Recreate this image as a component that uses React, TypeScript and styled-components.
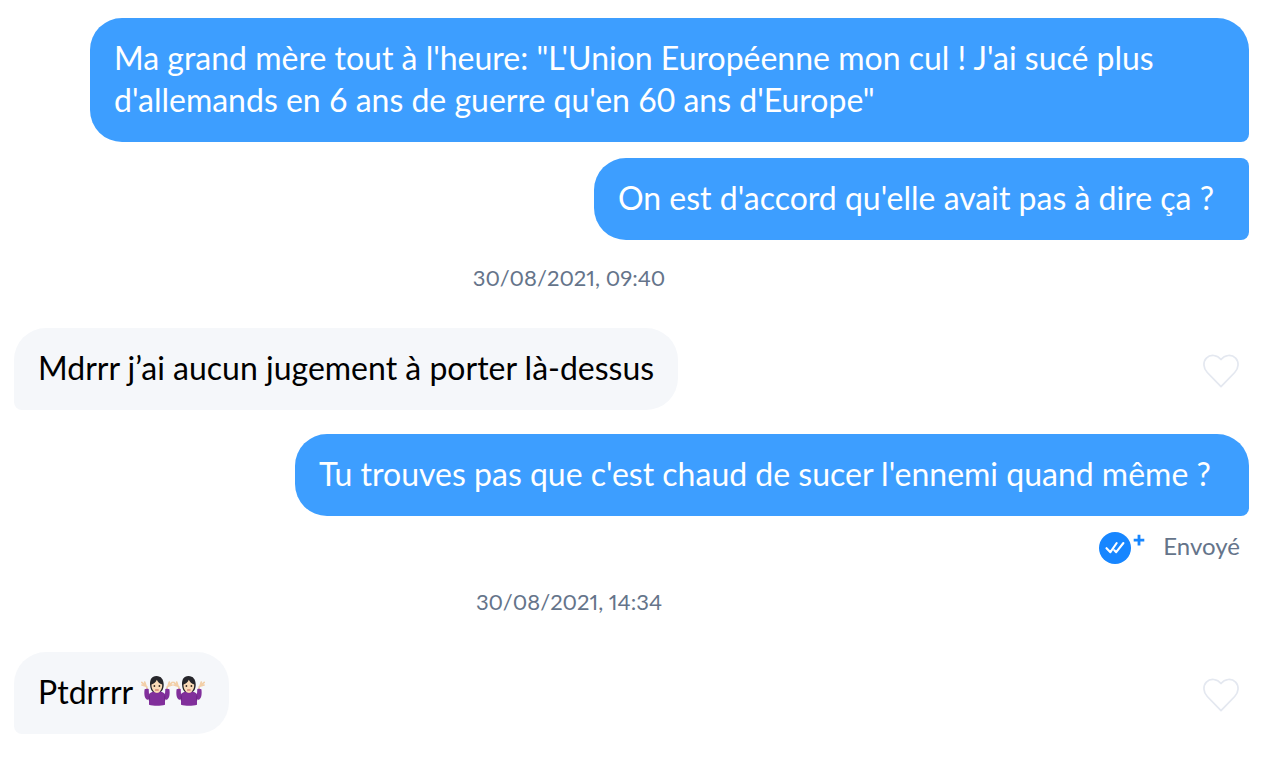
import React from "react";
import styled, { createGlobalStyle, css } from "styled-components";

const GlobalStyle = createGlobalStyle`
  *, *::before, *::after { box-sizing: border-box; }
  body {
    margin: 0;
    background: #fff;
    font-family: Lato, "Liberation Sans", sans-serif;
  }
`;

const Conversation = styled.main`
  display: flex;
  flex-direction: column;
  padding: 18px 25px 25px 14px;
`;

const Row = styled.div<{ $sent?: boolean; $gap?: number }>`
  display: flex;
  align-items: center;
  justify-content: ${(p) => (p.$sent ? "flex-end" : "space-between")};
  padding-left: ${(p) => (p.$sent ? 76 : 0)}px;
  margin-top: ${(p) => p.$gap ?? 0}px;
`;

const sentStyle = css<{ $grouped?: boolean }>`
  background: #3d9eff;
  color: #fff;
  border-radius: 32px ${(p) => (p.$grouped ? 8 : 32)}px 8px 32px;
`;

const receivedStyle = css`
  background: #f5f7fa;
  color: #000;
  border-radius: 32px 32px 32px 8px;
`;

const Bubble = styled.p<{ $sent?: boolean; $grouped?: boolean; $minWidth?: number }>`
  margin: 0;
  padding: 19px 24px 21px;
  min-width: ${(p) => p.$minWidth ?? 0}px;
  font-size: 32px;
  line-height: 42px;
  ${(p) => (p.$sent ? sentStyle : receivedStyle)}
`;

const EmojiSvg = styled.svg`
  width: 32px;
  height: 32px;
  vertical-align: -3px;
`;

const Timestamp = styled.time`
  display: block;
  padding-right: 125px;
  text-align: center;
  font-size: 22px;
  font-variant-numeric: proportional-nums;
  line-height: 32px;
  color: #65748a;
  margin: 22px 0 34px;
`;

const LikeButton = styled.button`
  display: flex;
  padding: 4px 0 0;
  margin-right: 8px;
  border: 0;
  background: none;
  cursor: pointer;
`;

const Status = styled.div`
  display: flex;
  align-items: center;
  justify-content: flex-end;
  gap: 16px;
  height: 32px;
  margin-top: 16px;
  padding-right: 9px;
  font-size: 24px;
  line-height: 28px;
  color: #65748a;
`;

const StatusText = styled.span`
  padding-bottom: 4px;
`;

function Like() {
  return (
    <LikeButton type="button" aria-label="J'aime">
      <svg width="40" height="40" viewBox="0 0 40 40" fill="none" stroke="#e4e8f0" strokeWidth="1.7" strokeLinejoin="round">
        <path d="M20 35.7 6.3 21.5C2.2 17.2 1.8 10.8 5.4 7.1c4-4 10.9-3.4 14.6 1.5 3.7-4.9 10.6-5.5 14.6-1.5 3.6 3.7 3.2 10.1-.9 14.4Z" />
      </svg>
    </LikeButton>
  );
}

function ReadReceipt() {
  return (
    <svg width="48" height="32" viewBox="0 0 48 32" fill="none" aria-hidden="true">
      <circle cx="16" cy="16" r="16" fill="#1786ff" />
      <path
        d="m7.5 16.2 3.9 4 6.3-9.2M15.3 18.3l1.9 1.9 7.2-9.2"
        stroke="#fff"
        strokeWidth="2.1"
        strokeLinecap="round"
        strokeLinejoin="round"
      />
      <path d="M40 2.7v10.8M34.7 8.1h10.6" stroke="#1786ff" strokeWidth="2.8" />
    </svg>
  );
}

/* Woman shrugging, light skin tone */
function Shrug() {
  return (
    <EmojiSvg viewBox="0 0 32 32" role="img" aria-label="🤷🏻‍♀️">
      <path d="M15.500 1C10.500 1 8.800 5 9 9.500c.2 4 1.500 7 4 8h5.500c3-1 4.300-4.500 4.200-8C22.500 4.500 20.200 1 15.500 1Z" fill="#26262b" />
      <path d="M13.500 15h5.200v5h-5.200z" fill="#e6bd96" />
      <path
        d="m6.200 16-.4-4.200L.8 7.300M5 11.200 3.700 7M4.300 11 .9 10M25.800 16l.4-4.200 5-4.500M27 11.200 28.300 7M27.700 11l3.400-1"
        fill="none"
        stroke="#f2cfa8"
        strokeWidth="1.7"
        strokeLinecap="round"
        strokeLinejoin="round"
      />
      <path d="M3.600 14.300c1.200-.8 2.800-.8 4.100-.2l.3 5c1.500-1.500 3.500-2.400 5.500-2.600 1.500 1.600 3.700 1.600 5.200 0 2 .2 3.900 1.100 5.300 2.600l.3-5c1.300-.6 2.900-.6 4.100.2.700 4.700 0 8.900-2.100 10.200-.8.500-1.600.3-2.300-.2v5.400c-4.500 1.300-11.500 1.300-16 0v-5.400c-.7.500-1.500.7-2.300.2-2.100-1.300-2.800-5.500-2.100-10.200Z" fill="#812f9b" />
      <path d="M8.200 20.500v5M23.800 20.500v5" stroke="#64217c" strokeWidth=".8" />
      <path d="M10.500 9.500c2.500-.8 4.300-2.300 5.300-4.700 1 2.300 2.800 3.900 5.400 4.700.2 4.500-2.200 8.300-5.300 8.300s-5.600-3.800-5.400-8.300Z" fill="#fadbb8" />
      <circle cx="13.400" cy="11" r=".9" fill="#37291f" />
      <circle cx="18.400" cy="11" r=".9" fill="#37291f" />
      <path d="M14.500 15h2.800" stroke="#c05c55" strokeWidth="1" strokeLinecap="round" />
    </EmojiSvg>
  );
}

export default function App() {
  return (
    <Conversation>
      <GlobalStyle />
      <Row $sent>
        <Bubble $sent>
          Ma grand mère tout à l'heure: "L'Union Européenne mon cul ! J'ai sucé plus d'allemands en 6 ans de guerre
          qu'en 60 ans d'Europe"
        </Bubble>
      </Row>
      <Row $sent $gap={16}>
        <Bubble $sent $grouped $minWidth={655}>
          On est d'accord qu'elle avait pas à dire ça ?
        </Bubble>
      </Row>
      <Timestamp dateTime="2021-08-30T09:40">30/08/2021, 09:40</Timestamp>
      <Row>
        <Bubble>Mdrrr j’ai aucun jugement à porter là-dessus</Bubble>
        <Like />
      </Row>
      <Row $sent $gap={24}>
        <Bubble $sent $minWidth={954}>
          Tu trouves pas que c'est chaud de sucer l'ennemi quand même ?
        </Bubble>
      </Row>
      <Status>
        <ReadReceipt />
        <StatusText>Envoyé</StatusText>
      </Status>
      <Timestamp dateTime="2021-08-30T14:34">30/08/2021, 14:34</Timestamp>
      <Row>
        <Bubble>
          Ptdrrrr <Shrug /><Shrug />
        </Bubble>
        <Like />
      </Row>
    </Conversation>
  );
}
